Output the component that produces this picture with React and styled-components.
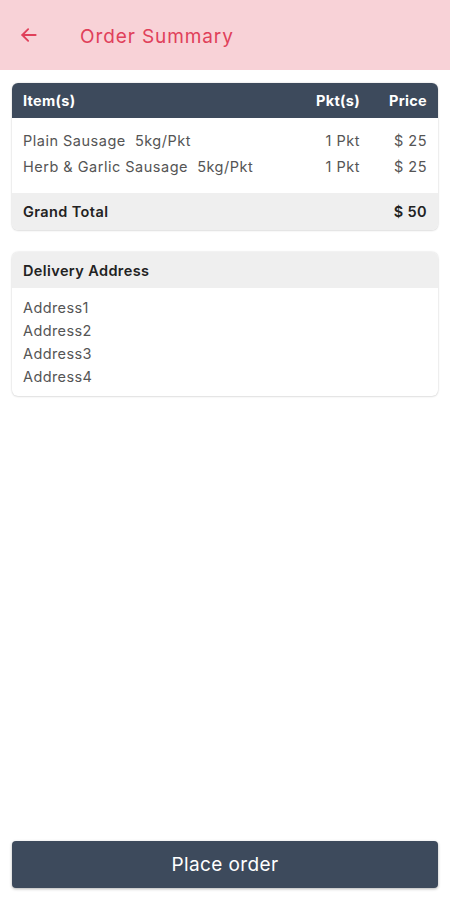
import React from 'react'
import styled, { createGlobalStyle } from 'styled-components'

const GlobalStyle = createGlobalStyle`
  html, body {
    margin: 0;
    padding: 0;
    background: #ffffff;
  }
  body {
    font-family: Inter, "Noto Sans", "Liberation Sans", sans-serif;
  }
  * {
    box-sizing: border-box;
  }
`

const items = [
  { name: 'Plain Sausage  5kg/Pkt', qty: '1 Pkt', price: '$ 25' },
  { name: 'Herb & Garlic Sausage  5kg/Pkt', qty: '1 Pkt', price: '$ 25' },
]

const address = ['Address1', 'Address2', 'Address3', 'Address4']

function BackArrow() {
  return (
    <svg width="20" height="20" viewBox="0 0 24 24" fill="none" stroke="#e0405a" strokeWidth="2.2" strokeLinecap="round" strokeLinejoin="round">
      <path d="M20 12H4" />
      <path d="M11 5l-7 7 7 7" />
    </svg>
  )
}

export default function App() {
  return (
    <>
      <GlobalStyle />
      <Page>
        <Header>
          <BackButton>
            <BackArrow />
          </BackButton>
          <Title>Order Summary</Title>
        </Header>

        <Content>
          <Card>
            <TableHead>
              <NameCell>Item(s)</NameCell>
              <QtyCell>Pkt(s)</QtyCell>
              <PriceCell>Price</PriceCell>
            </TableHead>
            <TableBody>
              {items.map((it, i) => (
                <ItemRow key={i}>
                  <NameCell>{it.name}</NameCell>
                  <QtyCell>{it.qty}</QtyCell>
                  <PriceCell>{it.price}</PriceCell>
                </ItemRow>
              ))}
            </TableBody>
            <TotalRow>
              <span>Grand Total</span>
              <span>$ 50</span>
            </TotalRow>
          </Card>

          <Card>
            <GreyHead>Delivery Address</GreyHead>
            <AddressList>
              {address.map(a => (
                <AddressLine key={a}>{a}</AddressLine>
              ))}
            </AddressList>
          </Card>
        </Content>

        <Footer>
          <PlaceButton>Place order</PlaceButton>
        </Footer>
      </Page>
    </>
  )
}

const Page = styled.div`
  min-height: 100vh;
  display: flex;
  flex-direction: column;
`

const Header = styled.div`
  height: 70px;
  background: #f8d2d7;
  display: flex;
  align-items: center;
  padding-left: 19px;
  gap: 41px;
`

const BackButton = styled.div`
  width: 20px;
  height: 20px;
  display: flex;
  align-items: center;
  justify-content: center;
`

const Title = styled.div`
  color: #e0405a;
  font-size: 19px;
  font-weight: 400;
  letter-spacing: 0.9px;
  margin-top: 2px;
`

const Content = styled.div`
  padding: 13px 12px 0;
  display: flex;
  flex-direction: column;
  gap: 22px;
`

const Card = styled.div`
  border-radius: 6px;
  overflow: hidden;
  background: #fff;
  box-shadow: 0 0 2px rgba(0, 0, 0, 0.18), 0 1px 2px rgba(0, 0, 0, 0.08);
`

const Row = styled.div`
  display: grid;
  grid-template-columns: 1fr 70px 67px;
  align-items: center;
  padding: 0 11px;
  letter-spacing: 0.5px;
`

const TableHead = styled(Row)`
  height: 35px;
  background: #3d4a5c;
  color: #fff;
  font-weight: 700;
  font-size: 14.5px;
  letter-spacing: 0.3px;
`

const TableBody = styled.div`
  padding: 9px 0 14px;
`

const ItemRow = styled(Row)`
  height: 26px;
  color: #555;
  font-size: 14.5px;
`

const NameCell = styled.div`
  white-space: pre;
`

const QtyCell = styled.div`
  text-align: right;
`

const PriceCell = styled.div`
  text-align: right;
`

const TotalRow = styled.div`
  height: 37px;
  background: #efefef;
  display: flex;
  align-items: center;
  justify-content: space-between;
  padding: 0 11px;
  font-weight: 600;
  font-size: 14.5px;
  letter-spacing: 0.4px;
  color: #222;
`

const GreyHead = styled.div`
  height: 36px;
  background: #efefef;
  display: flex;
  align-items: center;
  padding: 0 11px;
  font-weight: 600;
  font-size: 14.5px;
  letter-spacing: 0.4px;
  color: #222;
`

const AddressList = styled.div`
  padding: 8px 11px 8px;
`

const AddressLine = styled.div`
  font-size: 14.5px;
  line-height: 23px;
  letter-spacing: 0.4px;
  color: #555;
`

const Footer = styled.div`
  margin-top: auto;
  padding: 0 12px 12px;
`

const PlaceButton = styled.button`
  width: 100%;
  height: 47px;
  border: none;
  border-radius: 4px;
  background: #3d4a5c;
  color: #fff;
  font-family: inherit;
  font-size: 19px;
  letter-spacing: 0.4px;
  box-shadow: 0 1px 3px rgba(0, 0, 0, 0.3);
`
